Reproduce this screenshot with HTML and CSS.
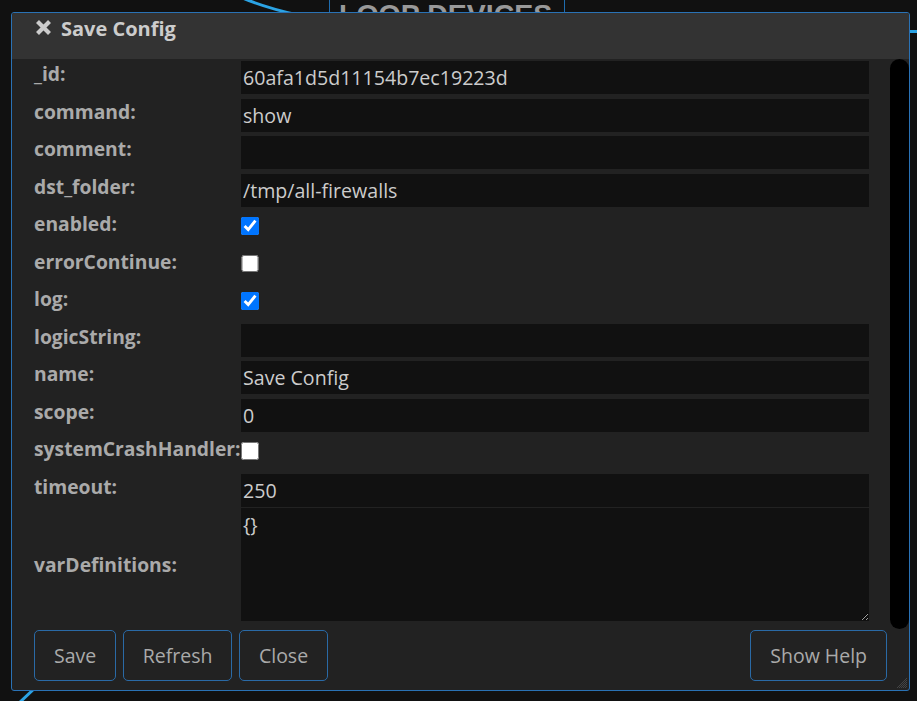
FILE: index.html
```html
<!DOCTYPE html>
<html lang="en">
<head>
<meta charset="utf-8">
<title>Save Config</title>
<link rel="stylesheet" href="styles.css">
</head>
<body>
<svg class="canvas" width="917" height="701" viewBox="0 0 917 701">
  <path class="wire" d="M238 -4 Q262 7 298 15"/>
  <rect class="node" x="329.5" y="-30.5" width="235" height="80"/>
  <text class="node-title" x="339" y="23.5">LOOP DEVICES</text>
  <path class="wire" d="M905 31.5 L920 31.5"/>
  <path class="wire" d="M18 704 L36 687"/>
</svg>

<div class="dialog">
  <div class="titlebar">
    <svg class="close-icon" width="17" height="17" viewBox="0 0 17 17">
      <path d="M2.5 2.5 L14.5 14.5 M14.5 2.5 L2.5 14.5"/>
    </svg>
    <span class="title">Save Config</span>
  </div>

  <div class="body">
    <div class="scroll">
      <form class="fields">
        <label class="lbl">_id:</label>
        <input class="txt" type="text" value="60afa1d5d11154b7ec19223d">
        <label class="lbl">command:</label>
        <input class="txt" type="text" value="show">
        <label class="lbl">comment:</label>
        <input class="txt" type="text" value="">
        <label class="lbl">dst_folder:</label>
        <input class="txt" type="text" value="/tmp/all-firewalls">
        <label class="lbl">enabled:</label>
        <input class="chk" type="checkbox" checked>
        <label class="lbl">errorContinue:</label>
        <input class="chk" type="checkbox">
        <label class="lbl">log:</label>
        <input class="chk" type="checkbox" checked>
        <label class="lbl">logicString:</label>
        <input class="txt" type="text" value="">
        <label class="lbl">name:</label>
        <input class="txt" type="text" value="Save Config">
        <label class="lbl">scope:</label>
        <input class="txt" type="text" value="0">
        <label class="lbl">systemCrashHandler:</label>
        <input class="chk" type="checkbox">
        <label class="lbl">timeout:</label>
        <input class="txt" type="text" value="250">
        <label class="lbl lbl-mid">varDefinitions:</label>
        <textarea class="area">{}</textarea>
      </form>
    </div>
    <div class="scrollbar"><div class="thumb"></div></div>
  </div>

  <div class="buttons">
    <button class="btn" type="button">Save</button>
    <button class="btn" type="button">Refresh</button>
    <button class="btn" type="button">Close</button>
    <button class="btn btn-right" type="button">Show Help</button>
  </div>

  <svg class="grip" width="12" height="12" viewBox="0 0 12 12">
    <path d="M11 1 L1 11 M11 3 L3 11 M11 5 L5 11 M11 7 L7 11 M11 9 L9 11"/>
  </svg>
</div>
</body>
</html>
```

FILE: styles.css
```css
html, body {
  margin: 0;
  padding: 0;
}

body {
  position: relative;
  width: 917px;
  height: 701px;
  overflow: hidden;
  background: #111;
  font-family: "Open Sans", "Noto Sans", sans-serif;
}

.canvas {
  position: absolute;
  left: 0;
  top: 0;
}

.wire {
  fill: none;
  stroke: #2ba3e4;
  stroke-width: 3;
}

.node {
  fill: #111;
  stroke: #1f6cae;
  stroke-width: 1;
}

.node-title {
  font-family: "Liberation Sans", Arial, sans-serif;
  font-weight: bold;
  font-size: 28.5px;
  fill: #999;
}

.dialog {
  position: absolute;
  left: 11px;
  top: 12px;
  width: 899px;
  height: 679px;
  box-sizing: border-box;
  border: 1px solid #2a72b5;
  border-radius: 3px;
  background: #222;
  display: flex;
  flex-direction: column;
  overflow: hidden;
}

.titlebar {
  height: 46px;
  flex: none;
  box-sizing: border-box;
  background: #333;
  display: flex;
  align-items: flex-start;
  padding: 2px 0 0 23px;
  gap: 9px;
}

.close-icon {
  margin-top: 4px;
  flex: none;
}

.close-icon path {
  stroke: #ccc;
  stroke-width: 4.2;
  fill: none;
}

.title {
  color: #ccc;
  font-weight: bold;
  font-size: 20px;
  line-height: 27px;
}

.body {
  flex: 1;
  min-height: 0;
  display: flex;
}

.scroll {
  flex: 1;
  overflow: hidden;
  padding: 2px 21px 0 22px;
}

.fields {
  margin: 0;
  display: grid;
  grid-template-columns: 207px 1fr;
  grid-template-rows: repeat(12, 33px) 113px;
  row-gap: 4.5px;
}

.lbl {
  color: #aaa;
  font-weight: bold;
  font-size: 19.3px;
  line-height: 26px;
  white-space: nowrap;
  align-self: start;
}

.lbl-mid {
  align-self: center;
  margin-top: -6px;
}

.txt {
  font: inherit;
  font-size: 19.6px;
  color: #ccc;
  background: #111;
  border: none;
  outline: none;
  margin: 0;
  padding: 0 2px;
  height: 33px;
  width: 100%;
  box-sizing: border-box;
}

.chk {
  margin: 6px 0 0 0;
  width: 17.5px;
  height: 17.5px;
  align-self: start;
  justify-self: start;
}

.area {
  font: inherit;
  font-size: 19.6px;
  line-height: 26px;
  color: #ccc;
  background: #111;
  border: none;
  outline: none;
  margin: -3px 0 0 0;
  padding: 4px 2px 0 2px;
  height: 113px;
  width: 100%;
  box-sizing: border-box;
}

.scrollbar {
  width: 19px;
  flex: none;
  background: #232323;
}

.thumb {
  height: calc(100% - 1px);
  background: #000;
  border-radius: 10px;
}

.buttons {
  height: 60px;
  flex: none;
  box-sizing: border-box;
  display: flex;
  align-items: flex-start;
  gap: 6.5px;
  padding: 0 22px 9px 22px;
}

.btn {
  height: 51px;
  padding: 0 19px;
  font: inherit;
  font-size: 19.5px;
  color: #aaa;
  background: #222;
  border: 1px solid #2a6aa6;
  border-radius: 5px;
}

.btn-right {
  margin-left: auto;
}

.grip {
  position: absolute;
  right: 1px;
  bottom: 1px;
}

.grip path {
  stroke: #444;
  stroke-width: 1;
  fill: none;
}
```
